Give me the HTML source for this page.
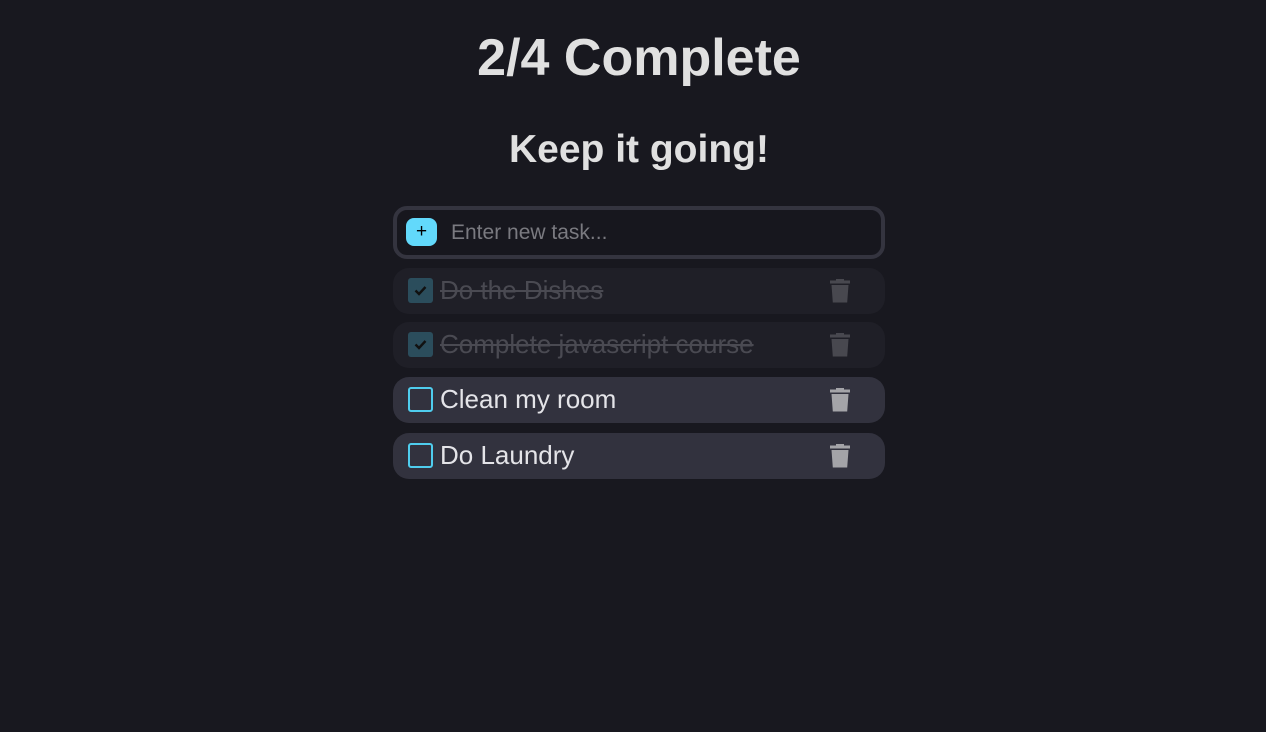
<!DOCTYPE html>
<html><head><meta charset="utf-8"><style>
*{box-sizing:border-box;margin:0;padding:0}
html,body{width:1266px;height:732px;background:#18181f;font-family:"Liberation Sans",Arial,sans-serif;overflow:hidden}
h1{position:absolute;left:6px;width:1266px;text-align:center;top:28px;font-size:52px;font-weight:bold;color:#e0e0e0;line-height:60px}
h2{position:absolute;left:6px;width:1266px;text-align:center;top:127px;font-size:39px;font-weight:bold;color:#e0e0e0;line-height:46px}
.inp{position:absolute;left:393px;top:206px;width:492px;height:53px;border:4px solid #34343f;border-radius:14px;background:#17171e}
.plus{position:absolute;left:9px;top:8px;width:31px;height:28px;border-radius:8px;background:#62d9fb;color:#000;font-size:19px;line-height:27px;text-align:center}
.ph{position:absolute;left:54px;top:0;line-height:45px;font-size:21px;color:#7a7a80}
.row{position:absolute;left:393px;width:492px;height:46px;border-radius:16px}
.done{background:#1f1f27}
.todo{background:#32323e}
.cb{position:absolute;left:15px;top:10px;width:25px;height:25px;border-radius:3px}
.done .cb{background:#2b4d5c}
.todo .cb{border:2px solid #4fcdee}
.txt{position:absolute;left:47px;top:0;line-height:45px;font-size:26px}
.done .txt{color:#4a4a52;text-decoration:line-through}
.todo .txt{color:#e4e4e8}
.tr{position:absolute;left:436px;top:11px}
</style></head><body>
<h1>2/4 Complete</h1>
<h2>Keep it going!</h2>
<div class="inp"><div class="plus">+</div><div class="ph">Enter new task...</div></div>
<div class="row done" style="top:268px"><div class="cb"><svg width="25" height="25"><path d="M7.5 12.5l3.5 3.5 6.5-7" stroke="#111" stroke-width="2.4" fill="none"/></svg></div><div class="txt">Do the Dishes</div><svg class="tr" width="22" height="24"><path d="M1 1.5h20v3H1z M7 0h8v2H7z M2.5 6h17l-1.3 17.5H3.8z" fill="#48484f"/></svg></div>
<div class="row done" style="top:322px"><div class="cb"><svg width="25" height="25"><path d="M7.5 12.5l3.5 3.5 6.5-7" stroke="#111" stroke-width="2.4" fill="none"/></svg></div><div class="txt">Complete javascript course</div><svg class="tr" width="22" height="24"><path d="M1 1.5h20v3H1z M7 0h8v2H7z M2.5 6h17l-1.3 17.5H3.8z" fill="#48484f"/></svg></div>
<div class="row todo" style="top:377px"><div class="cb"></div><div class="txt">Clean my room</div><svg class="tr" width="22" height="24"><path d="M1 1.5h20v3H1z M7 0h8v2H7z M2.5 6h17l-1.3 17.5H3.8z" fill="#a4a4a8"/></svg></div>
<div class="row todo" style="top:433px"><div class="cb"></div><div class="txt">Do Laundry</div><svg class="tr" width="22" height="24"><path d="M1 1.5h20v3H1z M7 0h8v2H7z M2.5 6h17l-1.3 17.5H3.8z" fill="#a4a4a8"/></svg></div>
</body></html>
